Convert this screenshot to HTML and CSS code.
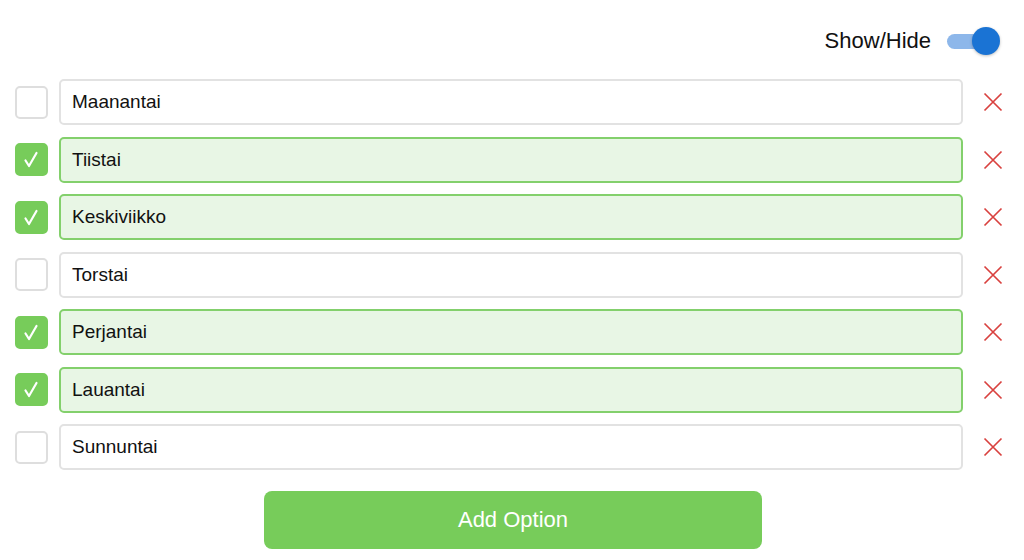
FILE: index.html
```html
<!DOCTYPE html>
<html>
<head>
<meta charset="utf-8">
<link rel="stylesheet" href="styles.css">
</head>
<body>
<div class="app">
  <header class="header">
    <span class="toggle-label">Show/Hide</span>
    <span class="toggle"><span class="track"></span><span class="knob"></span></span>
  </header>
  <ul class="list">
    <li class="row"><span class="box"></span><div class="field">Maanantai</div><span class="del"><svg viewBox="0 0 20 20" width="20" height="20"><path d="M1.5 1.5L18.5 18.5M18.5 1.5L1.5 18.5"/></svg></span></li>
    <li class="row done"><span class="box"><svg viewBox="0 0 32 32" width="32" height="32"><path d="M10.5 17.5L14 23L21.5 10"/></svg></span><div class="field">Tiistai</div><span class="del"><svg viewBox="0 0 20 20" width="20" height="20"><path d="M1.5 1.5L18.5 18.5M18.5 1.5L1.5 18.5"/></svg></span></li>
    <li class="row done"><span class="box"><svg viewBox="0 0 32 32" width="32" height="32"><path d="M10.5 17.5L14 23L21.5 10"/></svg></span><div class="field">Keskiviikko</div><span class="del"><svg viewBox="0 0 20 20" width="20" height="20"><path d="M1.5 1.5L18.5 18.5M18.5 1.5L1.5 18.5"/></svg></span></li>
    <li class="row"><span class="box"></span><div class="field">Torstai</div><span class="del"><svg viewBox="0 0 20 20" width="20" height="20"><path d="M1.5 1.5L18.5 18.5M18.5 1.5L1.5 18.5"/></svg></span></li>
    <li class="row done"><span class="box"><svg viewBox="0 0 32 32" width="32" height="32"><path d="M10.5 17.5L14 23L21.5 10"/></svg></span><div class="field">Perjantai</div><span class="del"><svg viewBox="0 0 20 20" width="20" height="20"><path d="M1.5 1.5L18.5 18.5M18.5 1.5L1.5 18.5"/></svg></span></li>
    <li class="row done"><span class="box"><svg viewBox="0 0 32 32" width="32" height="32"><path d="M10.5 17.5L14 23L21.5 10"/></svg></span><div class="field">Lauantai</div><span class="del"><svg viewBox="0 0 20 20" width="20" height="20"><path d="M1.5 1.5L18.5 18.5M18.5 1.5L1.5 18.5"/></svg></span></li>
    <li class="row"><span class="box"></span><div class="field">Sunnuntai</div><span class="del"><svg viewBox="0 0 20 20" width="20" height="20"><path d="M1.5 1.5L18.5 18.5M18.5 1.5L1.5 18.5"/></svg></span></li>
  </ul>
  <div class="actions"><button class="add">Add Option</button></div>
</div>
</body>
</html>
```
FILE: styles.css
```css
* { box-sizing: border-box; }
html, body { margin: 0; padding: 0; background: #fff; }
body { font-family: "Liberation Sans", Arial, sans-serif; color: #111; }
.app { width: 1024px; height: 560px; padding: 0 2px 0 15px; }
.header { height: 79px; display: flex; align-items: center; justify-content: flex-end; padding-top: 3px; padding-right: 22px; }
.toggle-label { font-size: 22px; color: #111; margin-right: 16px; }
.toggle { position: relative; width: 53px; height: 28px; display: inline-block; }
.track { position: absolute; left: 0; top: 7px; width: 44px; height: 15px; border-radius: 8px; background: #8db7ea; }
.knob { position: absolute; left: 25px; top: 0; width: 28px; height: 28px; border-radius: 50%; background: #1a73d4; box-shadow: 0 1px 3px rgba(0,0,0,0.25); }
.list { list-style: none; margin: 0; padding: 0; display: flex; flex-direction: column; gap: 11.5px; }
.row { display: flex; align-items: center; height: 46px; }
.box { width: 33px; height: 33px; border: 2px solid #dedede; border-radius: 5px; background: #fff; flex: none; display: flex; }
.done .box { background: #77cc5a; border-color: #77cc5a; }
.box svg { margin: -2px; }
.box path { fill: none; stroke: #fff; stroke-width: 2.2; stroke-linecap: round; stroke-linejoin: round; }
.field { flex: 1; margin-left: 11px; height: 46px; border: 2px solid #e2e2e2; border-radius: 5px; padding: 0 11px; display: flex; align-items: center; font-size: 19px; color: #111; }
.done .field { background: #e8f6e5; border-color: #83d06c; }
.del { width: 59px; flex: none; display: flex; justify-content: center; }
.del path { fill: none; stroke: #d9413f; stroke-width: 1.7; }
.actions { display: flex; justify-content: center; padding-top: 21px; padding-right: 11px; }
.add { width: 498px; height: 58px; border: none; border-radius: 8px; background: #77cc5a; color: #fff; font-family: "Liberation Sans", Arial, sans-serif; font-size: 22px; }
```
